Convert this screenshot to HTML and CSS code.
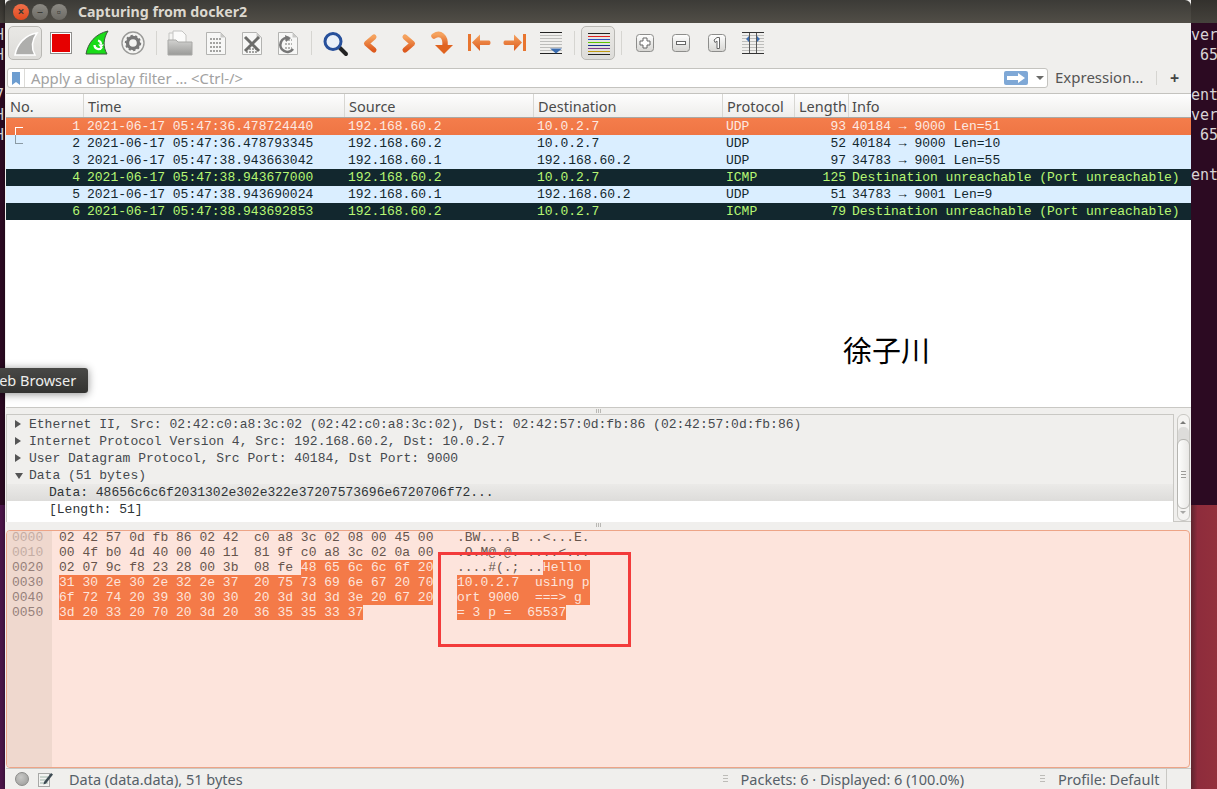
FILE: index.html
```html
<!DOCTYPE html>
<html lang="en">

<head>
    <meta charset="UTF-8">
    <meta name="viewport" content="width=device-width, initial-scale=1.0">
    <title>Capturing from docker2</title>
    <link rel="stylesheet" href="styles.css">
</head>

<body>
    <svg class="defs" width="0" height="0">
        <defs>
            <linearGradient id="orange" x1="0" y1="0" x2="0" y2="1">
                <stop offset="0" stop-color="#f5a25e" />
                <stop offset="1" stop-color="#dd5a1e" />
            </linearGradient>
            <linearGradient id="folder" x1="0" y1="0" x2="0" y2="1">
                <stop offset="0" stop-color="#d2d2d0" />
                <stop offset="1" stop-color="#9a9a98" />
            </linearGradient>
            <linearGradient id="key" x1="0" y1="0" x2="0" y2="1">
                <stop offset="0" stop-color="#ffffff" />
                <stop offset="1" stop-color="#d6d5d2" />
            </linearGradient>
        </defs>
    </svg>

    <div class="desktop">
        <div class="side side-left">
            <div class="side-title"></div>
            <div class="term term-left">
                <div>H</div>
                <div>H</div>
                <div>&nbsp;</div>
                <div>7</div>
                <div>H</div>
                <div>H</div>
            </div>
            <div class="side-wall side-wall-left"></div>
        </div>

        <div class="window">
            <div class="titlebar">
                <span class="win-btn win-close">×</span>
                <span class="win-btn">–</span>
                <span class="win-btn">▫</span>
                <span class="win-title">Capturing from docker2</span>
            </div>

            <div class="toolbar">
                <button class="tb-item tb-on">
                    <svg width="34" height="34" viewBox="0 0 34 34"><path d="M7 29C9 18 17 9 29 7C24 14 23 22 27 29Z" fill="#aeaeac" stroke="#fff" stroke-width="1.5" /></svg>
                </button>
                <button class="tb-item">
                    <svg width="34" height="34" viewBox="0 0 34 34"><rect x="6.5" y="6.5" width="21" height="21" fill="#fff" stroke="#8f8f8d" /><rect x="8" y="8" width="18" height="18" fill="#e60000" /></svg>
                </button>
                <button class="tb-item">
                    <svg width="34" height="34" viewBox="0 0 34 34"><path d="M6 28C8 17 15 8 28 5C23 13 23 21 27 28Z" fill="#19dc19" stroke="#3c5a3c" /><path d="M14.500 19a4 4 0 0 0 7.500 2" fill="none" stroke="#fff" stroke-width="2.200" /><path d="M18 14.500a4 4 0 0 1 3 4" fill="none" stroke="#fff" stroke-width="2.200" /><path d="M18 18.500h6l-3 3.500z" fill="#fff" /></svg>
                </button>
                <button class="tb-item">
                    <svg width="34" height="34" viewBox="0 0 34 34"><circle cx="17" cy="17" r="11" fill="#f4f4f2" stroke="#9a9a98" stroke-width="1.4" /><circle cx="17" cy="17" r="5.5" fill="none" stroke="#777" stroke-width="3.4" /><circle cx="17" cy="17" r="7.4" fill="none" stroke="#777" stroke-width="1.6" stroke-dasharray="2.2 2.4" /></svg>
                </button>
                <span class="tb-sep"></span>
                <button class="tb-item">
                    <svg width="34" height="34" viewBox="0 0 34 34"><path d="M6 24V7h9l4 4v13z" fill="#f4f4f2" stroke="#c4c4c2" /><path d="M10 24V5h9l4 4v15z" fill="#fbfbfa" stroke="#c4c4c2" /><path d="M5 29V14h8l2 2h14v13z" fill="url(#folder)" stroke="#a8a8a6" /></svg>
                </button>
                <button class="tb-item">
                    <svg width="34" height="34" viewBox="0 0 34 34"><path d="M7.500 6.500h14l5 5v17h-19z" fill="#f7f7f6" stroke="#b3b3b1" /><path d="M21.500 6.500v5h5z" fill="#c9c9c7" /><path d="M11 13h12M11 17h12M11 21h12M11 25h12" stroke="#a3a3a1" stroke-width="2" stroke-dasharray="2 1" /></svg>
                </button>
                <button class="tb-item">
                    <svg width="34" height="34" viewBox="0 0 34 34"><path d="M7.500 6.500h14l5 5v17h-19z" fill="#f7f7f6" stroke="#b3b3b1" /><path d="M21.500 6.500v5h5z" fill="#c9c9c7" /><path d="M11 23h12M11 26h12" stroke="#a3a3a1" stroke-width="2" stroke-dasharray="2 1" /><path d="M10 11l14 14M24 11L10 25" stroke="#6c6c6a" stroke-width="3" /></svg>
                </button>
                <button class="tb-item">
                    <svg width="34" height="34" viewBox="0 0 34 34"><path d="M7.500 6.500h14l5 5v17h-19z" fill="#f7f7f6" stroke="#b3b3b1" /><path d="M21.500 6.500v5h5z" fill="#c9c9c7" /><path d="M14 14h7M14 18h7M14 22h7" stroke="#b5b5b3" stroke-width="2" stroke-dasharray="2 1" /><path d="M22 23a7 7 0 1 1-4-11" fill="none" stroke="#777" stroke-width="2.600" /><path d="M14 9l6 3-5 4z" fill="#777" /></svg>
                </button>
                <span class="tb-sep"></span>
                <button class="tb-item">
                    <svg width="34" height="34" viewBox="0 0 34 34"><path d="M21 21l7 7" stroke="#222" stroke-width="4" stroke-linecap="round" /><circle cx="15" cy="15.500" r="8" fill="#eaf0f8" stroke="#27509b" stroke-width="3" /></svg>
                </button>
                <button class="tb-item">
                    <svg width="34" height="34" viewBox="0 0 34 34"><path d="M20 11L12.500 17.500L20 24" fill="none" stroke="url(#orange)" stroke-width="5" stroke-linejoin="round" stroke-linecap="round" /></svg>
                </button>
                <button class="tb-item">
                    <svg width="34" height="34" viewBox="0 0 34 34"><path d="M15 11L22.500 17.500L15 24" fill="none" stroke="url(#orange)" stroke-width="5" stroke-linejoin="round" stroke-linecap="round" /></svg>
                </button>
                <button class="tb-item">
                    <svg width="34" height="34" viewBox="0 0 34 34"><path d="M8 10c6-4 12 0 11 10" fill="none" stroke="url(#orange)" stroke-width="5.500" stroke-linecap="round" /><path d="M9 19h18l-9 9z" fill="#e0631f" /></svg>
                </button>
                <button class="tb-item">
                    <svg width="34" height="34" viewBox="0 0 34 34"><path d="M7.500 8v17" stroke="#e8752f" stroke-width="3" /><path d="M10 16.500l8-8v6h9c2 0 2 4.500 0 4.500h-9v6z" fill="url(#orange)" /></svg>
                </button>
                <button class="tb-item">
                    <svg width="34" height="34" viewBox="0 0 34 34"><path d="M26.500 8v17" stroke="#e8752f" stroke-width="3" /><path d="M24 16.500l-8-8v6H7c-2 0-2 4.500 0 4.500h9v6z" fill="url(#orange)" /></svg>
                </button>
                <button class="tb-item">
                    <svg width="34" height="34" viewBox="0 0 34 34"><path d="M6 6.500h22M6 27.500h22" stroke="#222" /><path d="M6 9.500h22M6 12.500h22M6 15.500h22M6 18.500h22M6 21.500h22M6 24.500h22" stroke="#bdbdbb" /><path d="M16 22.500h12l-6 5z" fill="#3a6cb0" /></svg>
                </button>
                <span class="tb-sep"></span>
                <button class="tb-item tb-on">
                    <svg width="34" height="34" viewBox="0 0 34 34"><path d="M7 7.500h22" stroke="#222" /><path d="M7 10.500h22" stroke="#e02020" /><path d="M7 13.500h22" stroke="#2a4fc0" /><path d="M7 16.500h22" stroke="#5cc400" /><path d="M7 19.500h22" stroke="#16348c" /><path d="M7 22.500h22" stroke="#7a3a8e" /><path d="M7 25.500h22" stroke="#c09a10" /><path d="M7 28.500h22" stroke="#222" /></svg>
                </button>
                <span class="tb-sep"></span>
                <button class="tb-item">
                    <svg width="34" height="34" viewBox="0 0 34 34"><rect x="8.500" y="8.500" width="17" height="17" rx="3" fill="url(#key)" stroke="#8d8d8b" /><path d="M15 12h4v3h3v4h-3v3h-4v-3h-3v-4h3z" fill="#fff" stroke="#666" /></svg>
                </button>
                <button class="tb-item">
                    <svg width="34" height="34" viewBox="0 0 34 34"><rect x="8.500" y="8.500" width="17" height="17" rx="3" fill="url(#key)" stroke="#8d8d8b" /><rect x="12.500" y="15.500" width="9" height="3" fill="#fff" stroke="#666" /></svg>
                </button>
                <button class="tb-item">
                    <svg width="34" height="34" viewBox="0 0 34 34"><rect x="8.500" y="8.500" width="17" height="17" rx="3" fill="url(#key)" stroke="#8d8d8b" /><path d="M14 14l3-2.500h2.500v11H17V15l-2 1.500z" fill="#fff" stroke="#666" /></svg>
                </button>
                <button class="tb-item">
                    <svg width="34" height="34" viewBox="0 0 34 34"><path d="M6 6.500h22M6 27.500h22" stroke="#333" /><path d="M6 9.500h22M6 12.500h22M6 15.500h22M6 18.500h22M6 21.500h22M6 24.500h22" stroke="#bdbdbb" /><path d="M13.500 7v20M20.500 7v20" stroke="#555" /><path d="M13 10v6l-3-3zM21 10v6l3-3z" fill="#3a6cb0" /></svg>
                </button>
            </div>

            <div class="filterbar">
                <div class="filter-input">
                    <span class="filter-mark">
                        <svg width="8" height="13" viewBox="0 0 8 13"><path d="M0 0h8v13L4 10 0 13z" fill="#6d9dd0" /></svg>
                    </span>
                    <span class="filter-hint">Apply a display filter … &lt;Ctrl-/&gt;</span>
                    <span class="filter-go">
                        <svg width="18" height="10" viewBox="0 0 18 10"><path d="M0 3h11V0l7 5-7 5V7H0z" fill="#fff" /></svg>
                    </span>
                    <span class="filter-drop"></span>
                </div>
                <span class="filter-expr">Expression…</span>
                <span class="filter-sep"></span>
                <span class="filter-add">+</span>
            </div>

            <div class="packet-list">
                <div class="pkt-row pkt-head">
                    <span class="num-head">No.</span>
                    <span>Time</span>
                    <span>Source</span>
                    <span>Destination</span>
                    <span>Protocol</span>
                    <span>Length</span>
                    <span>Info</span>
                </div>
                <div class="pkt-row pkt-sel">
                    <span class="num"><i class="rel rel-first"></i>1</span>
                    <span>2021-06-17 05:47:36.478724440</span>
                    <span>192.168.60.2</span>
                    <span>10.0.2.7</span>
                    <span>UDP</span>
                    <span class="len">93</span>
                    <span>40184 → 9000 Len=51</span>
                </div>
                <div class="pkt-row pkt-udp">
                    <span class="num"><i class="rel rel-last"></i>2</span>
                    <span>2021-06-17 05:47:36.478793345</span>
                    <span>192.168.60.2</span>
                    <span>10.0.2.7</span>
                    <span>UDP</span>
                    <span class="len">52</span>
                    <span>40184 → 9000 Len=10</span>
                </div>
                <div class="pkt-row pkt-udp">
                    <span class="num">3</span>
                    <span>2021-06-17 05:47:38.943663042</span>
                    <span>192.168.60.1</span>
                    <span>192.168.60.2</span>
                    <span>UDP</span>
                    <span class="len">97</span>
                    <span>34783 → 9001 Len=55</span>
                </div>
                <div class="pkt-row pkt-icmp">
                    <span class="num">4</span>
                    <span>2021-06-17 05:47:38.943677000</span>
                    <span>192.168.60.2</span>
                    <span>10.0.2.7</span>
                    <span>ICMP</span>
                    <span class="len">125</span>
                    <span>Destination unreachable (Port unreachable)</span>
                </div>
                <div class="pkt-row pkt-udp">
                    <span class="num">5</span>
                    <span>2021-06-17 05:47:38.943690024</span>
                    <span>192.168.60.1</span>
                    <span>192.168.60.2</span>
                    <span>UDP</span>
                    <span class="len">51</span>
                    <span>34783 → 9001 Len=9</span>
                </div>
                <div class="pkt-row pkt-icmp">
                    <span class="num">6</span>
                    <span>2021-06-17 05:47:38.943692853</span>
                    <span>192.168.60.2</span>
                    <span>10.0.2.7</span>
                    <span>ICMP</span>
                    <span class="len">79</span>
                    <span>Destination unreachable (Port unreachable)</span>
                </div>
            </div>

            <div class="splitter"><span class="grip"></span></div>

            <div class="details">
                <div class="tree">
                    <div class="tree-row"><i class="arrow"></i>Ethernet II, Src: 02:42:c0:a8:3c:02 (02:42:c0:a8:3c:02), Dst: 02:42:57:0d:fb:86 (02:42:57:0d:fb:86)</div>
                    <div class="tree-row"><i class="arrow"></i>Internet Protocol Version 4, Src: 192.168.60.2, Dst: 10.0.2.7</div>
                    <div class="tree-row"><i class="arrow"></i>User Datagram Protocol, Src Port: 40184, Dst Port: 9000</div>
                    <div class="tree-row"><i class="arrow arrow-open"></i>Data (51 bytes)</div>
                    <div class="tree-row tree-child tree-sel">Data: 48656c6c6f2031302e302e322e37207573696e6720706f72...</div>
                    <div class="tree-row tree-child tree-last">[Length: 51]</div>
                </div>
                <div class="scrollbar">
                    <span class="scroll-up"></span>
                    <span class="scroll-track"></span>
                    <span class="scroll-thumb"><i></i><i></i><i></i></span>
                    <span class="scroll-down"></span>
                </div>
            </div>

            <div class="splitter splitter-low"><span class="grip"></span></div>

            <div class="hex-pane">
                <div class="hex-off">
                    <div class="off-dim">0000</div>
                    <div class="off-dim">0010</div>
                    <div>0020</div>
                    <div>0030</div>
                    <div>0040</div>
                    <div>0050</div>
                </div>
                <div class="hex-bytes">
                    <div>02 42 57 0d fb 86 02 42  c0 a8 3c 02 08 00 45 00</div>
                    <div>00 4f b0 4d 40 00 40 11  81 9f c0 a8 3c 02 0a 00</div>
                    <div>02 07 9c f8 23 28 00 3b  08 fe <span class="sel">48 65 6c 6c 6f 20</span></div>
                    <div><span class="sel">31 30 2e 30 2e 32 2e 37  20 75 73 69 6e 67 20 70</span></div>
                    <div><span class="sel">6f 72 74 20 39 30 30 30  20 3d 3d 3d 3e 20 67 20</span></div>
                    <div><span class="sel">3d 20 33 20 70 20 3d 20  36 35 35 33 37</span></div>
                </div>
                <div class="hex-ascii">
                    <div>.BW....B ..&lt;...E.</div>
                    <div>.O.M@.@. ....&lt;...</div>
                    <div>....#(.; ..<span class="sel">Hello </span></div>
                    <div><span class="sel">10.0.2.7  using p</span></div>
                    <div><span class="sel">ort 9000  ===&gt; g </span></div>
                    <div><span class="sel">= 3 p =  65537</span></div>
                </div>
            </div>

            <div class="statusbar">
                <span class="led"></span>
                <svg class="note" width="15" height="15" viewBox="0 0 15 15"><rect x="0.500" y="1.500" width="11" height="13" fill="#f3f3f1" stroke="#a8a8a6" /><path d="M2 5h8M2 8h8M2 11h8" stroke="#9fb4a8" /><path d="M6 10l7-9 2 1.500-7 9-2.500 1z" fill="#3c4a52" /></svg>
                <span class="status-text">Data (data.data), 51 bytes</span>
                <span class="status-grip status-grip-a"></span>
                <span class="status-text">Packets: 6 · Displayed: 6 (100.0%)</span>
                <span class="status-grip status-grip-b"></span>
                <span class="status-text status-profile">Profile: Default</span>
            </div>
        </div>

        <div class="side side-right">
            <div class="side-title"></div>
            <div class="term term-right">
                <div>ver</div>
                <div>&nbsp;65</div>
                <div>&nbsp;</div>
                <div>ent</div>
                <div>ver</div>
                <div>&nbsp;65</div>
                <div>&nbsp;</div>
                <div>ent</div>
            </div>
            <div class="side-wall side-wall-right"></div>
        </div>

        <div class="tooltip">Web Browser</div>
        <div class="name-tag">徐子川</div>
        <div class="red-box"></div>
    </div>
</body>

</html>
```

FILE: styles.css
```css
* {
    box-sizing: border-box;
}

body {
    margin: 0;
    font-family: "Noto Sans", sans-serif;
    font-size: 14.5px;
    background-color: #300a24;
}

.defs {
    position: absolute;
}

.desktop {
    position: relative;
    display: flex;
    width: 1217px;
    height: 789px;
    overflow: hidden;
}

/* bits of the desktop left and right of the window */
.side {
    display: flex;
    flex-direction: column;
    overflow: hidden;
    background-color: #2c0a22;
}

.side-left {
    width: 5px;
}

.side-right {
    flex: 1;
}

.side-title {
    height: 23px;
    flex: none;
    background: linear-gradient(#33312d, #45423c);
}

.term {
    height: 482px;
    flex: none;
    padding-top: 2px;
    font-family: "DejaVu Sans Mono", monospace;
    font-size: 15px;
    line-height: 20px;
    color: #d8d4d6;
}

.term div {
    white-space: pre;
}

.term-left div {
    margin-left: -5px;
}

.side-wall {
    flex: 1;
}

.side-wall-left {
    background-color: #4b1549;
}

.side-wall-right {
    background: linear-gradient(to right, #5d252e, #8e2c3c 25%, #93303c);
}

/* window */
.window {
    display: flex;
    flex-direction: column;
    width: 1186px;
    height: 789px;
    background-color: #f0efed;
    padding-left: 1px;
    box-shadow: 0 0 4px rgba(0, 0, 0, 0.5);
}

.titlebar {
    display: flex;
    align-items: center;
    flex: none;
    height: 23px;
    margin-left: -1px;
    padding-left: 8px;
    gap: 3px;
    background: linear-gradient(#3c3b37, #514e47);
    border-radius: 6px 6px 0 0;
}

.win-btn {
    display: flex;
    align-items: center;
    justify-content: center;
    width: 16px;
    height: 16px;
    border-radius: 50%;
    font-size: 12px;
    line-height: 1;
    color: #3c3b37;
    background: linear-gradient(#8b8983, #6c6a64);
}

.win-close {
    font-weight: bold;
    background: linear-gradient(#f0704a, #e04a20);
}

.win-title {
    margin-left: 8px;
    font-weight: bold;
    font-size: 14.2px;
    color: #dcd8cf;
}

.toolbar {
    display: flex;
    flex: none;
    align-items: flex-start;
    gap: 2px;
    height: 44px;
    padding: 3px 0 0 2px;
}

.tb-item {
    width: 34px;
    height: 34px;
    padding: 0;
    border: 1px solid transparent;
    border-radius: 5px;
    background: none;
    display: flex;
    align-items: center;
    justify-content: center;
}

.tb-item svg {
    flex: none;
}

.tb-on {
    border-color: #b9b8b4;
    background: linear-gradient(#e9e8e5, #dddcd9);
}

.tb-sep {
    flex: none;
    width: 1px;
    height: 24px;
    margin: 5px 4px 0;
    background-color: #d6d5d1;
}

.filterbar {
    display: flex;
    flex: none;
    align-items: flex-start;
    height: 26px;
    padding: 1px 0 0 1px;
}

.filter-input {
    display: flex;
    align-items: center;
    width: 1041px;
    height: 20px;
    background-color: #fff;
    border: 1px solid #c4c3bf;
    border-radius: 3px;
}

.filter-mark {
    display: flex;
    align-items: center;
    justify-content: center;
    flex: none;
    width: 17px;
    height: 18px;
    border-right: 1px solid #dcdbd8;
}

.filter-hint {
    flex: 1;
    padding-left: 6px;
    font-size: 14.85px;
    line-height: 18px;
    color: #a2a2a2;
}

.filter-go {
    display: flex;
    align-items: center;
    justify-content: center;
    width: 24px;
    height: 14px;
    background-color: #7fa8d6;
    border-radius: 2px;
}

.filter-drop {
    width: 0;
    height: 0;
    margin: 0 3px 0 8px;
    border-left: 4px solid transparent;
    border-right: 4px solid transparent;
    border-top: 4px solid #6a6a68;
}

.filter-expr {
    margin-left: 7px;
    width: 96px;
    font-size: 15px;
    color: #555;
    line-height: 18px;
}

.filter-sep {
    width: 1px;
    height: 14px;
    margin: 3px 0 0 5px;
    background-color: #d6d5d1;
}

.filter-add {
    margin-left: 13px;
    font-weight: bold;
    font-size: 16px;
    line-height: 20px;
    color: #444;
}

.packet-list {
    flex: none;
    height: 315px;
    background-color: #fff;
    border-top: 1px solid #c4c3bf;
    border-bottom: 1px solid #c9c8c4;
    font-family: "Liberation Mono", monospace;
    font-size: 13px;
}

.pkt-row {
    display: grid;
    grid-template-columns: 78px 261px 189px 189px 72px 54px 1fr;
    height: 17px;
    line-height: 17px;
    white-space: pre;
}

.pkt-row span {
    padding-left: 3px;
    overflow: hidden;
}

.pkt-row .num {
    position: relative;
    overflow: visible;
    padding-right: 4px;
    text-align: right;
}

.pkt-row .len {
    padding-right: 3px;
    text-align: right;
}

.pkt-head {
    height: 24px;
    line-height: 25px;
    font-family: "Noto Sans", sans-serif;
    font-size: 14.5px;
    color: #4a4a4a;
    background: linear-gradient(#fefefe, #eeedeb);
    border-bottom: 1px solid #a9a8a4;
}

.pkt-head span {
    padding-left: 4px;
    border-right: 1px solid #d8d7d3;
}

.pkt-head span:last-child {
    padding-left: 3px;
    border-right: none;
}

.pkt-head .num-head {
    padding-left: 4px;
}

.pkt-sel {
    color: #fdeae2;
    background: linear-gradient(#f47d4b, #ef7544);
}

.pkt-udp {
    color: #12272e;
    background-color: #daeeff;
}

.pkt-icmp {
    color: #b7f774;
    background-color: #12272e;
}

/* related packet bracket in the No. column */
.rel {
    position: absolute;
    left: 9px;
    width: 8px;
    border-left: 1px solid;
}

.rel-first {
    top: 9px;
    height: 8px;
    border-top: 1px solid #fff;
    border-left-color: #fff;
}

.rel-last {
    top: 0;
    height: 9px;
    border-bottom: 1px solid #8b9aa4;
    border-left-color: #8b9aa4;
}

.splitter {
    display: flex;
    flex: none;
    justify-content: center;
    height: 6px;
    padding-top: 1px;
}

.splitter-low {
    height: 9px;
    padding-top: 1px;
    border-top: 1px solid #c9c8c4;
}

.grip {
    width: 6px;
    height: 4px;
    background: repeating-linear-gradient(to right, #b9b8b4 0 1px, transparent 1px 2px);
}

.details {
    display: flex;
    flex: none;
    height: 107px;
    padding-right: 1px;
}

.tree {
    flex: 1;
    padding-top: 1px;
    border: 1px solid #c9c8c4;
    border-bottom: none;
    font-family: "Liberation Mono", monospace;
    font-size: 13px;
    color: #45494d;
    background-color: #f0efed;
}

.tree-row {
    display: flex;
    align-items: center;
    height: 17px;
    padding-left: 22px;
    position: relative;
    white-space: pre;
}

.tree-child {
    padding-left: 42px;
    color: #2e3336;
    background-color: #fff;
}

.tree-sel {
    background: linear-gradient(#ebeae8, #dddcda);
}

.tree-last {
    height: 21px;
    padding-top: 1px;
    align-items: flex-start;
}

.arrow {
    position: absolute;
    left: 8px;
    top: 4px;
    width: 0;
    height: 0;
    border-top: 4px solid transparent;
    border-bottom: 4px solid transparent;
    border-left: 6px solid #555;
}

.arrow-open {
    left: 8px;
    top: 6px;
    border-left: 4px solid transparent;
    border-right: 4px solid transparent;
    border-top: 6px solid #555;
    border-bottom: none;
}

.scrollbar {
    position: relative;
    flex: none;
    width: 13px;
    margin-left: 3px;
    border: 1px solid #c9c8c4;
    border-radius: 6px;
    background-color: #f4f3f1;
}

.scroll-up,
.scroll-down {
    position: absolute;
    left: 2px;
    width: 0;
    height: 0;
    border-left: 3px solid transparent;
    border-right: 3px solid transparent;
}

.scroll-up {
    top: 6px;
    border-bottom: 3px solid #7a7a78;
}

.scroll-down {
    bottom: 6px;
    border-top: 3px solid #a8a8a6;
}

.scroll-track {
    position: absolute;
    top: 12px;
    left: 0;
    right: 0;
    height: 14px;
    background-color: #dddcda;
    border-radius: 5px 5px 0 0;
}

.scroll-thumb {
    position: absolute;
    top: 24px;
    left: -1px;
    right: -1px;
    height: 70px;
    display: flex;
    flex-direction: column;
    justify-content: center;
    align-items: center;
    gap: 2px;
    padding-top: 0;
    border: 1px solid #b5b4b0;
    border-radius: 6px;
    background: linear-gradient(to right, #fdfdfc, #e9e8e6);
}

.scroll-thumb i {
    width: 5px;
    height: 1px;
    background-color: #9c9b98;
}

.hex-pane {
    display: flex;
    flex: 1;
    margin-right: 1px;
    overflow: hidden;
    border: 1px solid #eda487;
    border-radius: 4px;
    background-color: #fde4dc;
    font-family: "Liberation Mono", monospace;
    font-size: 13px;
    line-height: 15px;
    color: #66544c;
}

.hex-pane div div {
    height: 15px;
    white-space: pre;
}

.hex-off {
    flex: none;
    width: 45px;
    padding: 0 0 0 5px;
    background-color: #efd8ce;
    color: #96807a;
}

.hex-pane .off-dim {
    color: #c4ada4;
}

.hex-off div:first-child,
.hex-bytes div:first-child,
.hex-ascii div:first-child {
    margin-top: -1px;
}

.hex-bytes {
    flex: none;
    width: 398px;
    margin-left: 7px;
}

.hex-ascii {
    flex: none;
}

.sel {
    display: inline-block;
    background-color: #f47a48;
    color: #fde4dc;
}

.statusbar {
    display: flex;
    flex: none;
    align-items: center;
    height: 21px;
    padding-left: 9px;
    color: #566068;
    border-top: 1px solid #c9c8c4;
}

.led {
    flex: none;
    width: 14px;
    height: 14px;
    border: 1px solid #8a8a88;
    border-radius: 50%;
    background: radial-gradient(circle at 40% 35%, #c8c8c6, #9a9a98);
}

.note {
    flex: none;
    margin-left: 9px;
}

.status-text {
    flex: none;
    white-space: nowrap;
}

.note + .status-text {
    margin-left: 16px;
}

.status-grip {
    flex: none;
    width: 5px;
    height: 9px;
    background: repeating-linear-gradient(#bdbcb8 0 1px, transparent 1px 3px);
}

.status-grip-a {
    margin: 0 13px 0 auto;
}

.status-grip-b {
    margin: 0 13px 0 76px;
}

.status-profile {
    width: 109px;
    margin-right: 24px;
    border-right: 1px solid #c9c8c4;
}

/* things lying over everything else */
.tooltip {
    position: absolute;
    left: -26px;
    top: 368px;
    height: 25px;
    padding: 0 12px;
    line-height: 25px;
    font-size: 14.5px;
    color: #eeeeec;
    white-space: nowrap;
    background: linear-gradient(#484846, #333331);
    border-radius: 3px;
    box-shadow: 0 1px 8px rgba(0, 0, 0, 0.45);
}

.name-tag {
    position: absolute;
    left: 843px;
    top: 328px;
    font-family: "Noto Sans CJK SC", sans-serif;
    font-size: 29px;
    line-height: 42px;
    color: #000;
}

.red-box {
    position: absolute;
    left: 438px;
    top: 552px;
    width: 193px;
    height: 95px;
    border: 3px solid #f33b3b;
}
```
